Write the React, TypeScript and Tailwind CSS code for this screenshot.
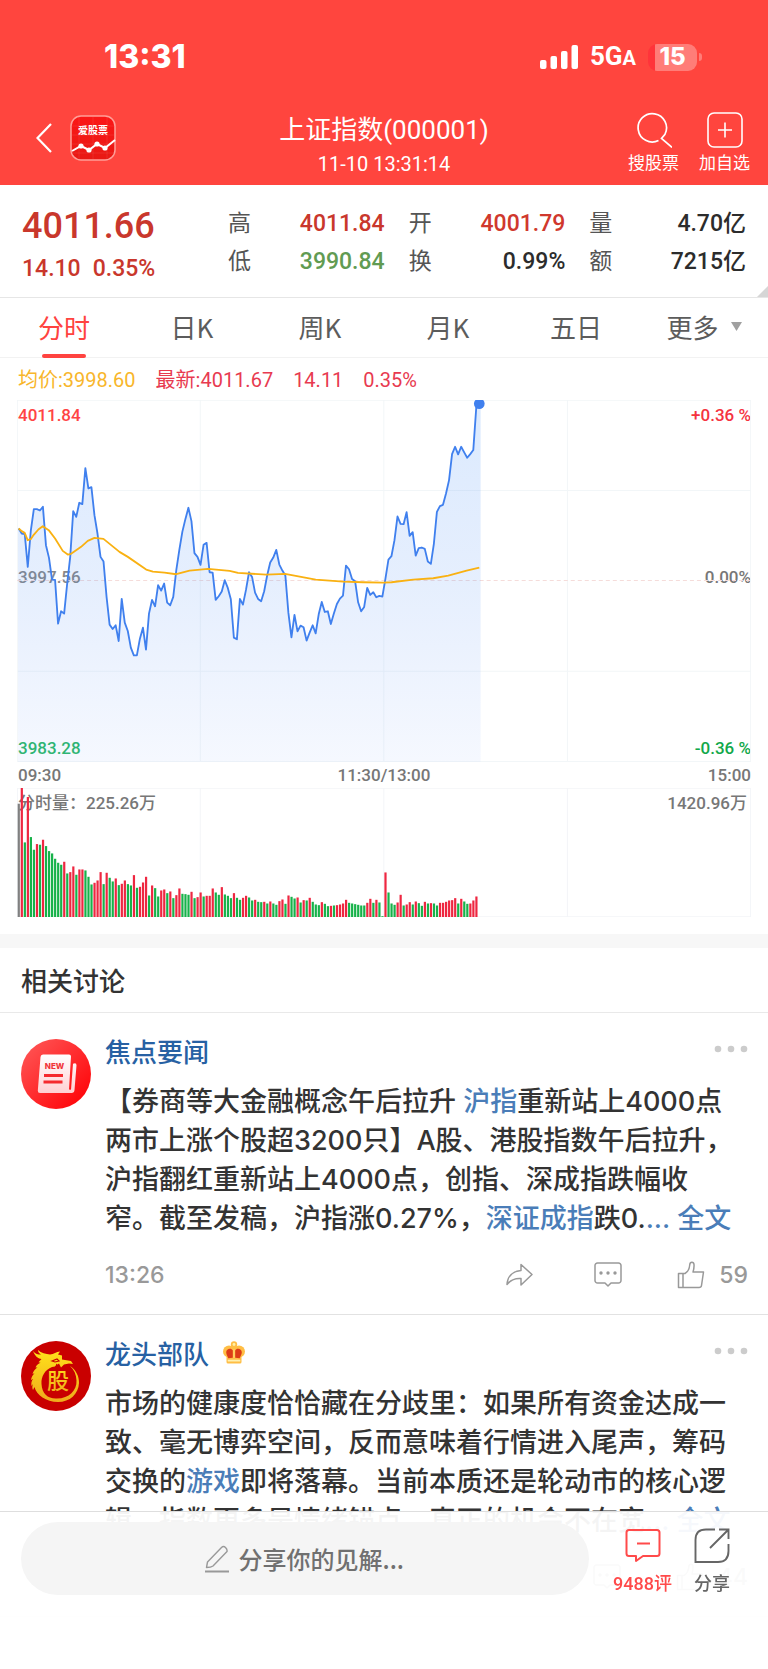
import React from "react";

const DIN = "font-['Roboto','Noto_Sans_CJK_SC',sans-serif]";

// Index level for each minute, as distance from the top of the price grid.
const PRICES = [
  415, 430, 432, 530, 422, 357, 357, 361, 350, 465, 503, 568, 569, 700, 663, 670, 580, 500, 363, 380, 338, 342, 234,
  295, 291, 375, 430, 500, 514, 620, 703, 716, 705, 752, 626, 697, 722, 772, 795, 795, 745, 712, 778, 670, 629, 648,
  585, 601, 580, 637, 645, 620, 540, 480, 425, 387, 353, 393, 489, 500, 524, 464, 458, 546, 547, 629, 618, 604, 570,
  593, 627, 742, 747, 626, 643, 599, 546, 560, 607, 626, 633, 603, 555, 517, 502, 479, 523, 541, 556, 668, 741, 674,
  723, 706, 711, 751, 727, 705, 729, 672, 635, 665, 663, 701, 670, 641, 625, 616, 526, 537, 566, 573, 636, 663, 650,
  593, 614, 606, 621, 617, 619, 566, 508, 498, 450, 379, 401, 402, 366, 437, 426, 496, 474, 472, 476, 514, 521, 460,
  365, 348, 344, 310, 270, 192, 170, 193, 170, 187, 203, 192, 180, 50, 41,
].map((y) => y - 30);

const AVERAGE: [number, number][] = [
  [5, 385], [14, 393], [23, 398], [32, 420], [41, 417], [50, 404], [64, 388], [77, 378], [95, 390], [114, 415],
  [137, 452], [152, 463], [162, 461], [192, 440], [212, 422], [232, 413], [259, 416], [307, 455], [332, 470],
  [387, 508], [407, 514], [442, 517], [477, 522], [517, 511], [572, 506], [637, 512], [662, 518], [747, 523],
  [803, 521], [895, 538], [977, 544], [1037, 546], [1097, 547], [1122, 546], [1187, 538], [1247, 534], [1292, 526],
  [1347, 511], [1385, 502],
];

// Traded volume for each minute; negative values mark a falling minute.
const VOLUMES = [
  340, 387, -224, 360, -240, -202, 219, -217, 232, -213, -198, -191, -175, -163, -157, 166, -131, 135, 152, -127, 143,
  143, -140, -121, -98, 103, 110, 135, -99, 133, -118, -107, 116, -96, 100, 110, -99, -95, 126, -88, 91, 104, 121,
  -65, 95, -87, -62, 80, 83, -72, 77, -57, 66, 86, -70, -69, -67, 76, -57, 60, 74, -62, 64, 64, 86, -74, -67, 90, -68,
  -64, -57, 72, -58, -52, 58, 64, -59, -50, 52, -46, -45, 46, -41, 47, -41, -37, 48, 53, -40, 65, -61, -56, 59, -44,
  51, -50, 58, -46, -38, -36, 45, -40, -33, 34, -35, 36, 38, 41, 52, -43, -41, -39, -37, -35, -35, 43, 55, -43, 52,
  -44, -3, 134, -74, -41, -37, 44, 67, -35, 38, 45, -38, 47, -42, -34, 46, -41, 42, -41, -35, 43, 43, 46, 50, 51, 57,
  -41, 55, -47, -40, 41, 50, 62,
];

const STEP = 9.08;
const px = (i: number) => 5 + i * STEP;
const pricePath = PRICES.map((y, i) => `${i ? "L" : "M"}${px(i).toFixed(1)} ${y}`).join("");
const averagePath = AVERAGE.map(([x, y], i) => `${i ? "L" : "M"}${x} ${y}`).join("");

const Mark = ({ children }: { children: React.ReactNode }) => (
  <a href="#" className="text-[#4a7db8]">
    {children}
  </a>
);

function StatusBar() {
  return (
    <div className="flex h-[104px] items-center justify-between pt-2.5 pr-[66px] pl-[104px]">
      <span className="font-['Inter',sans-serif] text-[32px] leading-8 font-extrabold">13:31</span>
      <div className="flex items-center gap-3">
        <svg viewBox="0 0 38 24" className="h-6 w-[38px]" fill="currentColor" aria-hidden="true">
          <rect x="0" y="15" width="6.5" height="9" rx="2" />
          <rect x="10.5" y="11" width="6.5" height="13" rx="2" />
          <rect x="21" y="6" width="6.5" height="18" rx="2" />
          <rect x="31.5" y="0" width="6.5" height="24" rx="2" />
        </svg>
        <span className="font-['Roboto',sans-serif] text-[26px] leading-8 font-bold">
          5G<span className="text-[20px]">A</span>
        </span>
        <div className="flex items-center gap-0.5">
          <div className="flex h-[27px] w-[49px] items-center justify-center rounded-[9px] bg-linear-to-r from-[#ff343a] from-15% to-[#ff7d78] to-15% font-['Inter',sans-serif] text-[24px] leading-none font-extrabold">
            15
          </div>
          <div className="h-2 w-[3px] rounded-r-full bg-[#ff7d78]" />
        </div>
      </div>
    </div>
  );
}

function Header() {
  return (
    <header className="bg-[#ff453e] text-white">
      <StatusBar />
      <div className="grid h-[81px] grid-cols-[1fr_auto_1fr] px-[18px]">
        <div className="flex items-start gap-[18px] pt-[11px] pl-[18px]">
          <button aria-label="返回" className="flex h-[46px] items-center">
            <svg viewBox="0 0 16 30" className="h-[30px] w-4" fill="none" stroke="currentColor" strokeWidth="2.2">
              <path d="M15 1 1.5 15 15 29" />
            </svg>
          </button>
          <svg viewBox="0 0 46 46" className="h-[46px] w-[46px]" aria-hidden="true">
            <defs>
              <linearGradient id="logo" x1="0" y1="0" x2="0" y2="1">
                <stop offset="0" stopColor="#fb1717" />
                <stop offset="1" stopColor="#e81914" />
              </linearGradient>
            </defs>
            <rect x="1" y="1" width="44" height="44" rx="10" fill="url(#logo)" stroke="#ff9e98" strokeWidth="1.5" />
            <path d="M9 2v42M23 2v42M37 2v42M2 11h42M2 20h42M2 29h42M2 38h42" stroke="#fff" strokeOpacity=".08" />
            <text
              x="23"
              y="19"
              textAnchor="middle"
              fill="#fff"
              className="font-['Noto_Sans_CJK_SC',sans-serif] text-[10px] font-bold"
            >
              爱股票
            </text>
            <path d="m2 36 9-5 8 4 8-6 8 4 10-8" fill="none" stroke="#fff" strokeWidth="2" />
            <g fill="#fff">
              <circle cx="11" cy="31" r="2.6" />
              <circle cx="19" cy="35" r="2.6" />
              <circle cx="27" cy="29" r="2.6" />
              <circle cx="35" cy="33" r="2.6" />
            </g>
          </svg>
        </div>
        <div className={`${DIN} pt-2.5 text-center`}>
          <h1 className="text-[26px] leading-8">上证指数(000001)</h1>
          <p className="mt-1.5 text-[20px] leading-6">11-10 13:31:14</p>
        </div>
        <div className="flex items-start justify-end gap-5 pt-2 text-[17px] leading-5">
          <button className="flex flex-col items-center gap-1">
            <svg viewBox="0 0 36 36" className="h-9 w-9" fill="none" stroke="currentColor" strokeWidth="1.7">
              <path d="M22.5 28.6A14.2 14.2 0 1 1 29 22.2L25.5 26.5 36 35.4" />
            </svg>
            搜股票
          </button>
          <button className="flex flex-col items-center gap-1">
            <svg viewBox="0 0 36 36" className="h-9 w-9" fill="none" stroke="currentColor" strokeWidth="1.6">
              <rect x="1" y="1" width="34" height="34" rx="6" />
              <path d="M18 10.500v15M11 18h14" />
            </svg>
            加自选
          </button>
        </div>
      </div>
    </header>
  );
}

const STATS = [
  ["高", "4011.84", "text-[#c9372c]"],
  ["开", "4001.79", "text-[#d0382d]"],
  ["量", "4.70亿", "text-[#2c2c2c]"],
  ["低", "3990.84", "text-[#619b52]"],
  ["换", "0.99%", "text-[#2c2c2c]"],
  ["额", "7215亿", "text-[#2c2c2c]"],
];

function Quote() {
  return (
    <section className={`${DIN} relative flex justify-between border-b border-[#e6e6e6] px-[22px] pt-[18px] pb-3`}>
      <div className="font-medium text-[#c9372c]">
        <p className="text-[36px] leading-[46px]">4011.66</p>
        <p className="flex gap-3 pt-1 text-[23px] leading-8">
          <span>14.10</span>
          <span>0.35%</span>
        </p>
      </div>
      <dl className="grid w-[518px] auto-rows-[38px] grid-cols-3 content-start gap-x-6 pt-0.5 text-[23px] leading-[38px]">
        {STATS.map(([label, value, tone]) => (
          <div key={label} className="flex justify-between">
            <dt className="text-[#555]">{label}</dt>
            <dd className={`font-medium ${tone}`}>{value}</dd>
          </div>
        ))}
      </dl>
      <svg viewBox="0 0 11 11" className="absolute right-0 bottom-0 h-[11px] w-[11px]" aria-hidden="true">
        <path d="M11 0v11H0z" fill="#d6d6d6" />
      </svg>
    </section>
  );
}

function Tabs() {
  return (
    <nav className="grid h-[60px] grid-cols-6 border-b border-[#f2f2f2] pb-0.5 font-['Noto_Sans_CJK_SC',sans-serif] text-[26px] text-[#5c5c5c]">
      {["分时", "日K", "周K", "月K", "五日", "更多"].map((tab, i) => (
        <button key={tab} className={i ? "flex items-center justify-center gap-3" : "relative text-[#ff4340]"}>
          {tab}
          {i === 0 && <span className="absolute inset-x-[42px] -bottom-[3px] h-1 rounded-full bg-[#ff4340]" />}
          {i === 5 && (
            <svg viewBox="0 0 11 9" className="h-[9px] w-[11px]" aria-hidden="true">
              <path d="M0 0h11L5.500 9z" fill="#a0a0a0" />
            </svg>
          )}
        </button>
      ))}
    </nav>
  );
}

function Chart() {
  return (
    <section className={`${DIN} px-[17px] pb-[17px] text-[17px] leading-6 font-medium text-[#777]`}>
      <p className="flex h-[42px] items-center gap-5 pt-0.5 pl-px text-[20px] font-normal text-[#e83a50]">
        <span className="text-[#f8b62b]">均价:3998.60</span>
        <span>最新:4011.67</span>
        <span>14.11</span>
        <span>0.35%</span>
      </p>
      <div className="relative">
        <span className="absolute top-[3px] left-px text-[#ff4444]">4011.84</span>
        <span className="absolute top-[3px] right-0 text-[#f5333f]">+0.36 %</span>
        <span className="absolute top-1/2 left-px -translate-y-4 text-[#888]">3997.56</span>
        <span className="absolute top-1/2 right-0 -translate-y-4">0.00%</span>
        <span className="absolute bottom-0.5 left-px text-[#2fb86c]">3983.28</span>
        <span className="absolute right-0 bottom-0.5 text-[#12a84a]">-0.36 %</span>
        <svg viewBox="0 0 2199 1084" className="relative block w-full" fill="none" role="img" aria-label="分时走势">
          <defs>
            <linearGradient id="area" x1="0" y1="0" x2="0" y2="1">
              <stop offset="0" stopColor="#3b8bfa" stopOpacity=".18" />
              <stop offset=".5" stopColor="#3b82f4" stopOpacity=".13" />
              <stop offset="1" stopColor="#3b78f6" stopOpacity=".05" />
            </linearGradient>
          </defs>
          <path
            d="M1 1h2197v1082H1zM549 0v1084M1099 0v1084M1649 0v1084M0 271h2199M0 813h2199"
            stroke="#f2f6f8"
            strokeWidth="3"
          />
          <path d="M0 541h2199" stroke="#f5dcda" strokeWidth="3" strokeDasharray="12 9" />
          <path d={`${pricePath}H1389V1084H3V385z`} fill="url(#area)" />
          <path d={pricePath} stroke="#4080ee" strokeWidth="5.500" strokeLinejoin="round" />
          <path d={averagePath} stroke="#f9b112" strokeWidth="5.500" strokeLinejoin="round" />
          <circle cx="1385" cy="11" r="16" fill="#4080ee" />
        </svg>
      </div>
      <div className="grid h-[26px] grid-cols-3 items-center">
        <span className="pl-px">09:30</span>
        <span className="text-center">11:30/13:00</span>
        <span className="text-right">15:00</span>
      </div>
      <div className="relative">
        <span className="absolute top-[3px] left-px">分时量：225.26万</span>
        <span className="absolute top-[3px] right-1">1420.96万</span>
        <svg viewBox="0 0 2199 387" className="relative block w-full" role="img" aria-label="分时成交量">
          <path
            d="M1 1h2197v385H1zM549 0v387M1099 0v387M1649 0v387"
            fill="none"
            stroke="#f3f5f8"
            strokeWidth="3"
          />
          {VOLUMES.map((v, i) => (
            <rect
              key={i}
              x={px(i) - 3}
              y={387 - Math.abs(v)}
              width="6.6"
              height={Math.abs(v)}
              fill={i === 0 ? "#808080" : v > 0 ? "#ee2741" : "#17b24a"}
            />
          ))}
        </svg>
      </div>
    </section>
  );
}

function PostActions({ time, likes }: { time: string; likes: number }) {
  return (
    <div className="flex h-[30px] items-center justify-between pr-5 font-['Inter',sans-serif] text-[23px] leading-7 font-medium text-[#999]">
      <time>{time}</time>
      <div className="flex items-center">
        <button aria-label="转发" className="mr-[61px]">
          <svg viewBox="0 0 27 24" className="h-6 w-[27px]" fill="none" stroke="currentColor" strokeWidth="1.5">
            <path
              strokeLinejoin="round"
              d="M15 1.500 26 11.500 15 22v-6.500C9 15 4.500 17 1 21.500 1.500 13 7 8 15 7.500z"
            />
          </svg>
        </button>
        <button aria-label="评论" className="mr-[55px]">
          <svg viewBox="0 0 28 25" className="h-[25px] w-7" fill="none" stroke="currentColor" strokeWidth="1.5">
            <path
              strokeLinejoin="round"
              d="M3.500 1h21A2.500 2.500 0 0 1 27 3.500v15a2.500 2.500 0 0 1-2.500 2.500H17l-3 3-3-3H3.500A2.500 2.500 0 0 1 1 18.500v-15A2.500 2.500 0 0 1 3.500 1z"
            />
            <g fill="currentColor" stroke="none">
              <circle cx="7" cy="11" r="1.700" />
              <circle cx="14" cy="11" r="1.700" />
              <circle cx="21" cy="11" r="1.700" />
            </g>
          </svg>
        </button>
        <button className="flex items-center gap-3.5">
          <svg viewBox="0 0 28 28" className="h-7 w-7" fill="none" stroke="currentColor" strokeWidth="1.5">
            <path
              strokeLinejoin="round"
              d="M1.500 12.500H8c3.500-2 4.500-5 4.800-9 .2-3 4-3 4.200 0 .2 2.500-.2 5-1 7.500h10.500l-2 13.500c-.2 1.500-1 2-2.500 2H1.500zM6 12.500v14"
            />
          </svg>
          {likes}
        </button>
      </div>
    </div>
  );
}

interface PostProps {
  avatar: React.ReactNode;
  name: string;
  badge?: React.ReactNode;
  time: string;
  likes: number;
  children: React.ReactNode;
}

function Post({ avatar, name, badge, time, likes, children }: PostProps) {
  return (
    <article className="flex gap-3.5 border-b border-[#e2e2e2] pt-[26px] pb-6 pl-[21px]">
      {avatar}
      <div className="min-w-0 flex-1">
        <div className="flex items-start justify-between pr-5">
          <h3 className="flex items-center gap-3.5 text-[26px] leading-6 font-medium text-[#2761a3]">
            {name}
            {badge}
          </h3>
          <button aria-label="更多操作" className="pt-1.5">
            <svg viewBox="0 0 34 8" className="block h-2 w-[34px]" fill="#ccc">
              <circle cx="4" cy="4" r="3.300" />
              <circle cx="17" cy="4" r="3.300" />
              <circle cx="30" cy="4" r="3.300" />
            </svg>
          </button>
        </div>
        <p className="mt-[19px] mb-[22px] pr-7 font-['Inter','Noto_Sans_CJK_SC',sans-serif] text-[27px] leading-[39px] font-medium text-[#333]">
          {children}
        </p>
        <PostActions time={time} likes={likes} />
      </div>
    </article>
  );
}

const NewsAvatar = () => (
  <svg viewBox="0 0 70 70" className="h-[70px] w-[70px] shrink-0" aria-hidden="true">
    <defs>
      <linearGradient id="news" x1="0" y1="0" x2="1" y2="1">
        <stop offset=".1" stopColor="#ff5252" />
        <stop offset=".85" stopColor="#ff0a0e" />
      </linearGradient>
      <linearGradient id="paper" x1="0" y1="0" x2="0" y2="1">
        <stop offset="0" stopColor="#fff" />
        <stop offset="1" stopColor="#ffd0d2" />
      </linearGradient>
    </defs>
    <circle cx="35" cy="35" r="35" fill="url(#news)" />
    <path
      d="M22 15.500h26q2 0 2 2L48 50.500l2 .2 2-26q3.500-1.500 3.500 1.500L53.500 51q-.2 3-3 3H19q-2.300 0-2.200-2.300L19.500 18q.2-2.500 2.500-2.500z"
      fill="url(#paper)"
    />
    <text
      x="33.500"
      y="29.500"
      textAnchor="middle"
      fill="#f1353a"
      className="font-['Inter',sans-serif] text-[8px] font-extrabold"
    >
      NEW
    </text>
    <path d="M23 36.500h19M22.500 43h19" stroke="#f52a2e" strokeWidth="2.800" />
  </svg>
);

const DragonAvatar = () => (
  <svg viewBox="0 0 70 70" className="h-[70px] w-[70px] shrink-0" aria-hidden="true">
    <defs>
      <linearGradient id="gold" x1="0" y1="0" x2="0" y2="1">
        <stop offset="0" stopColor="#ffe21a" />
        <stop offset="1" stopColor="#efab1c" />
      </linearGradient>
    </defs>
    <circle cx="35" cy="35" r="35" fill="#c90000" />
    <path
      fill="url(#gold)"
      d="M12 10c2 3 5 3.500 8 3.500-2-1.500-3-2.500-3-4.500 3 3 8 4 12 4.500 4-.5 6-2.500 10-3l-2 3 4 1v4l9 1.500 2 3-4-.5-5 1-3 3-2-4-4 3-3 .5c-7 3-11 9-10.500 17C21 53 27 58 36 57.500c12 0 20-8 19.500-18-.2-6-2.500-11-6.500-14.500 6 4 9 10 9 17C57.500 53 49 61 37 61 25 61 15.500 54 13.500 46L12 49c-1-2-.8-4 0-6l-1.500 2c-.5-3 0-5 1.500-7l-2 1c.5-3 1.500-5 3.500-6.500l-2 .2c1-3 3-5 5-6.200h-2c1-2.500 3-4 5-4.800l-2-.4 3-3.300c-4-.5-6.500-3-8.500-8z"
    />
    <path d="m31 20 5-2 2 2-4 1zM36 23l-2 5" fill="none" stroke="#c90000" strokeWidth="1.200" />
    <text
      x="37"
      y="48"
      textAnchor="middle"
      fill="url(#gold)"
      className="font-['Noto_Sans_CJK_SC',sans-serif] text-[22px] font-medium"
    >
      股
    </text>
  </svg>
);

const Crown = () => (
  <svg viewBox="0 0 22 23" className="h-[23px] w-[22px]" role="img" aria-label="会员">
    <g fill="#ffbe45">
      <circle cx="6" cy="10.500" r="6" />
      <circle cx="16" cy="10.500" r="6" />
      <circle cx="11" cy="3.500" r="3.200" />
      <path d="M8 5h6l2 8H6z" />
      <path d="M3.500 13h15v8q0 1.500-1.500 1.500H5q-1.500 0-1.500-1.500z" />
    </g>
    <g fill="#dd3b17">
      <path d="M9.800 9.500v7.200l-4.500.6C4.500 15 3.200 13.500 3.200 11.200c0-3.600 5.200-4.800 6.600-1.700z" />
      <path d="M12.200 9.500v7.200l4.500.6c.8-2.300 2.100-3.800 2.100-6.100 0-3.600-5.200-4.800-6.600-1.700z" />
    </g>
    <path d="M11 9v7" stroke="#ffcf5e" strokeWidth="2" strokeLinecap="round" />
    <path d="M5.500 19.700h11" stroke="#fff0b0" strokeWidth="1.800" strokeLinecap="round" />
    <circle cx="11" cy="3.500" r="1.400" fill="#fff1a8" />
  </svg>
);

function BottomBar() {
  return (
    <footer className="fixed inset-x-0 bottom-0 flex h-[158px] items-start border-t border-[#dedede] bg-white/95 pt-2.5 pr-[38px] pl-[21px]">
      <label className="flex h-[73px] flex-1 items-center justify-center gap-2.5 rounded-full bg-[#f5f5f5]">
        <svg viewBox="0 0 24 28" className="h-7 w-6" fill="none" stroke="#999" strokeWidth="1.400" aria-hidden="true">
          <path
            strokeLinejoin="round"
            d="M1.500 22.500 2.500 17 16.500 2.500q2-2 4 0t1.500 4L8 21q-2 1.500-6.500 1.500z"
          />
          <path d="M0 26.500h24" strokeWidth="2" />
        </svg>
        <input
          aria-label="分享你的见解"
          placeholder="分享你的见解..."
          className="w-[167px] bg-transparent text-[24px] leading-8 font-medium outline-none placeholder:text-[#707070]"
        />
      </label>
      <div className={`${DIN} ml-6 flex gap-[22px] pt-1.5 text-[18px] leading-6 font-medium`}>
        <button className="flex flex-col items-center gap-2 text-[#ff4a4a]">
          <svg viewBox="0 0 36 36" className="h-9 w-9" fill="none" stroke="currentColor" strokeWidth="2">
            <path
              strokeLinejoin="round"
              d="M4 2h28q2.500 0 2.500 2.500v21Q34.500 28 32 28H18l-7 5v-5H4q-2.500 0-2.500-2.500v-21Q1.500 2 4 2zM12 15.500h13"
            />
          </svg>
          9488评
        </button>
        <button className="flex flex-col items-center gap-2 text-[#666]">
          <svg viewBox="0 0 36 36" className="h-9 w-9" fill="none" stroke="currentColor" strokeWidth="1.900">
            <path d="M21 1.500H12Q1.500 1.500 1.500 12v22H24q10.500 0 10.500-11v-7M16 20 34 2M25 1.500h9.500V11" />
          </svg>
          分享
        </button>
      </div>
    </footer>
  );
}

export default function App() {
  return (
    <div className="h-screen overflow-y-auto bg-white pb-[158px] font-['Noto_Sans_CJK_SC',sans-serif] text-[#333] [scrollbar-width:none]">
      <Header />
      <main>
        <Quote />
        <Tabs />
        <Chart />
        <h2 className="border-t-[14px] border-b border-t-[#f7f7f7] border-b-[#e9e9e9] px-[21px] py-4 text-[26px] leading-8 font-medium">
          相关讨论
        </h2>
        <Post avatar={<NewsAvatar />} name="焦点要闻" time="13:26" likes={59}>
          【券商等大金融概念午后拉升 <Mark>沪指</Mark>重新站上4000点两市上涨个股超3200只】A股、港股指数午后拉升，沪指翻红重新站上4000点，创指、深成指跌幅收窄。截至发稿，沪指涨0.27%，
          <Mark>深证成指</Mark>跌0.<Mark>... 全文</Mark>
        </Post>
        <Post avatar={<DragonAvatar />} name="龙头部队" badge={<Crown />} time="13:25" likes={44}>
          市场的健康度恰恰藏在分歧里：如果所有资金达成一致、毫无博弈空间，反而意味着行情进入尾声，筹码交换的
          <Mark>游戏</Mark>即将落幕。当前本质还是轮动市的核心逻辑，指数更多是情绪锚点，真正的机会不在宽
          <Mark>... 全文</Mark>
        </Post>
      </main>
      <BottomBar />
    </div>
  );
}
